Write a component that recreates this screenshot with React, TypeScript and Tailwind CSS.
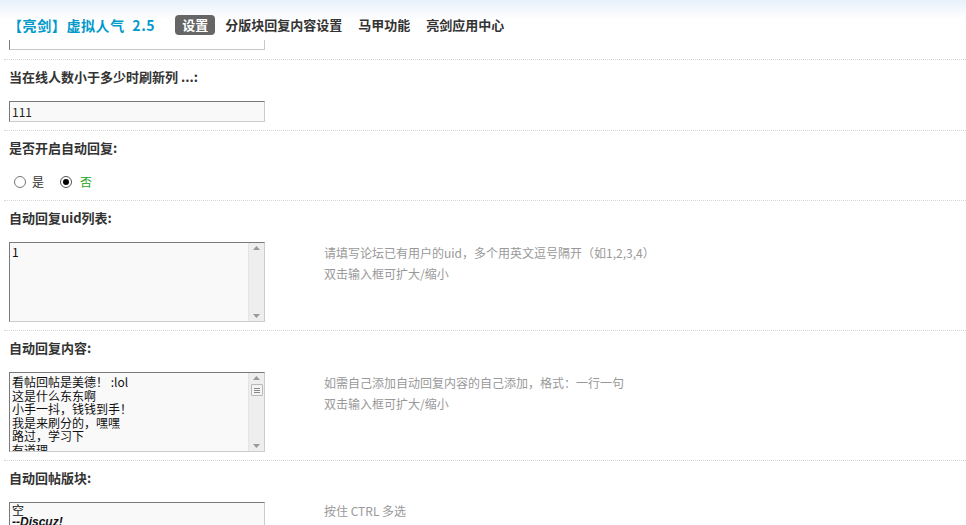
import React from 'react';

const FONT = { fontFamily: '"Noto Sans CJK SC", "Liberation Sans", sans-serif' };

function Section({ label, children }: { label: string; children: React.ReactNode }) {
  return (
    <div className="border-t border-dotted border-[#d6d6d6] ml-[4px] pb-[8px]">
      <div className="h-[41px] pt-[9px] pl-[5px] text-[13px] leading-[16px] font-bold text-[#333]">{label}</div>
      {children}
    </div>
  );
}

function FakeScrollbar({ thumb }: { thumb?: boolean }) {
  return (
    <div className="w-[16px] shrink-0 bg-[#eeeeee] border-l border-[#e4e4e4] flex flex-col items-center justify-between py-[3px]">
      <div className="flex flex-col items-center gap-[4px]">
        <svg width="7" height="4" viewBox="0 0 7 4">
          <path d="M0 4 L3.5 0 L7 4 Z" fill="#9a9a9a" />
        </svg>
        {thumb && (
          <div className="w-[12px] h-[12px] border border-[#b8b8b8] bg-[#f4f4f4] rounded-[1px] flex flex-col items-center justify-center gap-[1px]">
            <div className="w-[6px] h-px bg-[#888]" />
            <div className="w-[6px] h-px bg-[#888]" />
            <div className="w-[6px] h-px bg-[#888]" />
          </div>
        )}
      </div>
      <svg width="7" height="4" viewBox="0 0 7 4">
        <path d="M0 0 L7 0 L3.5 4 Z" fill="#9a9a9a" />
      </svg>
    </div>
  );
}

function FakeTextarea({ lines, thumb }: { lines: string[]; thumb?: boolean }) {
  return (
    <div className="flex w-[256px] h-[80px] border border-t-[#7a7a7a] border-l-[#7a7a7a] border-r-[#cccccc] border-b-[#cccccc] bg-[#f9f9f9] overflow-hidden">
      <div className="flex-1 pl-[2px] pt-[2px] text-[12px] leading-[13.5px] text-[#111] overflow-hidden">
        {lines.map((l, i) => (
          <div key={i} className="whitespace-nowrap">{l}</div>
        ))}
      </div>
      <FakeScrollbar thumb={thumb} />
    </div>
  );
}

function Tip({ lines }: { lines: string[] }) {
  return (
    <div className="ml-[59px] text-[12px] leading-[21px] text-[#999]">
      {lines.map((l, i) => (
        <div key={i}>{l}</div>
      ))}
    </div>
  );
}

export default function App() {
  return (
    <div className="w-[966px] h-[525px] overflow-hidden bg-white" style={FONT}>
      {/* header */}
      <div className="h-[40px] bg-gradient-to-b from-[#e8f1fb] via-white to-white flex items-center pt-[10px] pl-[8px]">
        <h3 className="text-[14px] font-bold text-[#0099cc] tracking-[0.6px]">【亮剑】虚拟人气&nbsp;&nbsp;2.5</h3>
        <div className="flex items-center ml-[20px] text-[13px] font-bold text-[#333]">
          <span className="h-[20px] leading-[20px] px-[7px] rounded-[4px] bg-[#666] text-white">设置</span>
          <span className="ml-[10px]">分版块回复内容设置</span>
          <span className="ml-[16px]">马甲功能</span>
          <span className="ml-[16px]">亮剑应用中心</span>
        </div>
      </div>

      {/* bottom of previous input (scrolled) */}
      <div className="h-[19px]">
        <div className="ml-[9px] w-[256px] h-[10px] border-x border-b border-[#c8c8c8] border-l-[#7a7a7a]" />
      </div>

      <Section label="当在线人数小于多少时刷新列 ...:">
        <div className="ml-[5px] w-[256px] h-[21px] border border-t-[#7a7a7a] border-l-[#7a7a7a] border-r-[#cccccc] border-b-[#cccccc] bg-[#f9f9f9] pl-[2px] text-[12px] leading-[19px] text-[#222]">
          111
        </div>
      </Section>

      <Section label="是否开启自动回复:">
        <div className="h-[20px] ml-[9px] flex items-center text-[12px]">
          <span className="ml-px w-[12px] h-[12px] rounded-full border border-[#777] bg-white" />
          <span className="ml-[6px] text-[#333]">是</span>
          <span className="ml-[16px] w-[12px] h-[12px] rounded-full border border-[#555] bg-white flex items-center justify-center">
            <span className="w-[6px] h-[6px] rounded-full bg-black" />
          </span>
          <span className="ml-[8px] text-[#22a422]">否</span>
        </div>
      </Section>

      <Section label="自动回复uid列表:">
        <div className="flex ml-[5px]">
          <FakeTextarea lines={['1']} />
          <Tip lines={['请填写论坛已有用户的uid，多个用英文逗号隔开（如1,2,3,4）', '双击输入框可扩大/缩小']} />
        </div>
      </Section>

      <Section label="自动回复内容:">
        <div className="flex ml-[5px]">
          <FakeTextarea
            thumb
            lines={['看帖回帖是美德！ :lol', '这是什么东东啊', '小手一抖，钱钱到手！', '我是来刷分的，嘿嘿', '路过，学习下', '有道理']}
          />
          <Tip lines={['如需自己添加自动回复内容的自己添加，格式：一行一句', '双击输入框可扩大/缩小']} />
        </div>
      </Section>

      <Section label="自动回帖版块:">
        <div className="flex ml-[5px]">
          <div className="w-[256px] h-[120px] border border-t-[#7a7a7a] border-l-[#7a7a7a] border-r-[#cccccc] border-b-[#cccccc] bg-[#f9f9f9] pl-[2px] text-[12px] leading-[13px] text-[#111]">
            <div>空</div>
            <div className="font-bold italic" style={{ fontFamily: '"Liberation Sans", sans-serif' }}>--Discuz!</div>
            <div>&nbsp;&nbsp;&nbsp;&nbsp;默认版块</div>
          </div>
          <div className="ml-[59px] text-[12px] leading-[18px] text-[#999]">按住 CTRL 多选</div>
        </div>
      </Section>
    </div>
  );
}
